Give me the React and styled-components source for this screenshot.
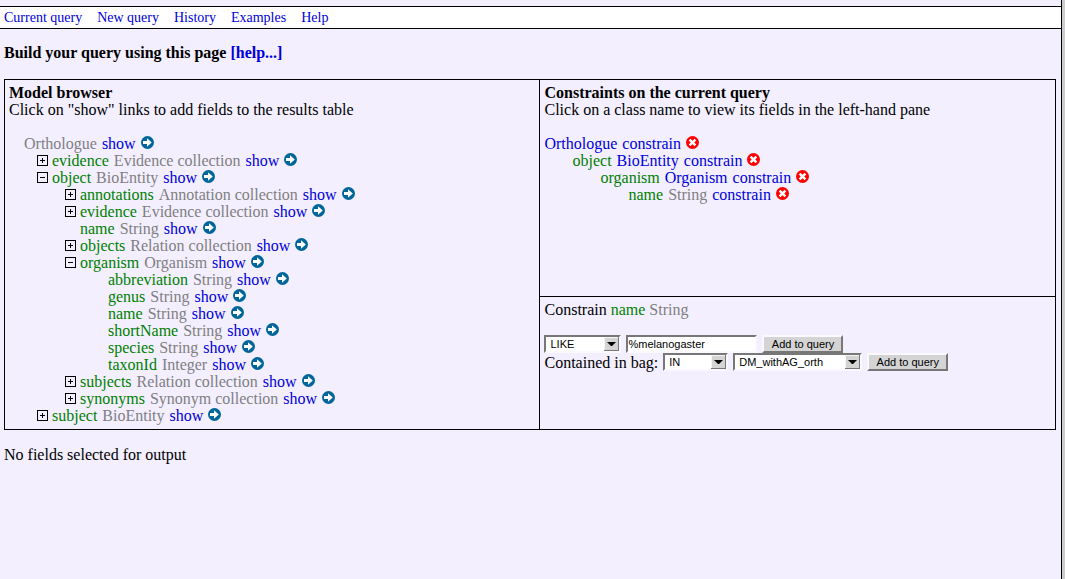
import React from "react";
import styled, { createGlobalStyle } from "styled-components";

const GlobalStyle = createGlobalStyle`
  *, *::before, *::after { box-sizing: border-box; }
  body {
    margin: 0;
    background: #f3efff;
    color: #000;
    font: 16px/17px "Liberation Serif", "Times New Roman", serif;
  }
`;

const Page = styled.div`
  min-height: 100vh;
  padding-top: 6px;
  border-right: 3px solid #ccc;
  box-shadow: inset -1px 0 0 #000;
`;

const Menu = styled.nav`
  display: flex;
  gap: 15px;
  margin-right: 1px;
  padding: 0 4px;
  background: #fff;
  border: solid #000;
  border-width: 1px 0;
  font-size: 14px;
  line-height: 21px;
`;

const Link = styled.a`
  color: #0000d8;
  text-decoration: none;
`;

const Content = styled.main`
  padding: 15px 6px 0 4px;
`;

const Title = styled.h1`
  margin: 0 0 17px;
  font-size: 16px;
  line-height: 18px;
`;

const Panels = styled.div`
  display: grid;
  grid-template-columns: 535fr 516fr;
  border: 1px solid #000;
`;

const Panel = styled.section`
  padding: 4px 4px 5px;
`;

const RightColumn = styled.div`
  display: flex;
  flex-direction: column;
  border-left: 1px solid #000;
`;

const ConstraintPanel = styled(Panel)`
  flex: 1;
`;

const EditorPanel = styled(Panel)`
  min-height: 133px;
  border-top: 1px solid #000;
`;

const PanelTitle = styled.h2`
  margin: 0;
  font-size: 16px;
  line-height: 17px;
`;

const Text = styled.p`
  margin: 0 0 ${(p) => (p.$spaced ? "17px" : "0")};
`;

const List = styled.ul`
  margin: 0;
  padding: 0;
  list-style: none;
`;

const Row = styled.li`
  display: flex;
  align-items: center;
  height: 17px;
  padding-left: ${(p) => p.$depth * 28}px;
  white-space: nowrap;
`;

const Entry = styled.span`
  display: flex;
  align-items: center;
  gap: 5px;
`;

const Slot = styled.span`
  display: flex;
  width: 15px;
`;

const Toggle = styled.button`
  display: flex;
  width: 11px;
  height: 11px;
  padding: 0;
  border: 1px solid #000;
  border-radius: 0;
  background: transparent;
`;

const Field = styled.span`
  color: #008000;
`;

const Type = styled.span`
  color: #808080;
`;

const IconLink = styled.a`
  display: flex;
  height: 15px;
`;

const Footer = styled.p`
  margin: 16px 0 0;
`;

const FormRow = styled.form`
  display: flex;
  align-items: center;
  gap: 5px;
  height: 18px;
  white-space: nowrap;
`;

const SelectBox = styled.span`
  position: relative;
  display: flex;
  width: ${(p) => p.$width}px;
`;

const Select = styled.select`
  appearance: none;
  width: 100%;
  height: 18px;
  padding: 0 18px 0 4px;
  border: 2px solid;
  border-color: #777 #fbf9ff #fbf9ff #777;
  border-radius: 0;
  background: #fff;
  color: #000;
  font: 11px/14px "Liberation Sans", Arial, sans-serif;
`;

const Arrow = styled.svg`
  position: absolute;
  top: 2px;
  right: 2px;
  pointer-events: none;
`;

const TextInput = styled.input`
  width: 131px;
  height: 18px;
  padding: 0;
  border: 2px solid;
  border-color: #777 #fbf9ff #fbf9ff #777;
  border-radius: 0;
  background: #fff;
  color: #000;
  font: 11px/14px "Liberation Sans", Arial, sans-serif;
`;

const Submit = styled.button`
  width: 81px;
  height: 18px;
  padding: 0;
  border: 2px solid;
  border-color: #fbf9ff #777 #777 #fbf9ff;
  border-radius: 0;
  background: #d4d4d4;
  color: #000;
  font: 11px/14px "Liberation Sans", Arial, sans-serif;
`;

const ShowIcon = () => (
  <svg width="13" height="13" viewBox="0 0 13 13" aria-hidden="true">
    <circle cx="6.5" cy="6.5" r="6.5" fill="#006699" />
    <path d="M2 5h4V2.2L10.8 6.5L6 10.8V8H2z" fill="#fff" />
  </svg>
);

const RemoveIcon = () => (
  <svg width="13" height="13" viewBox="0 0 13 13" aria-hidden="true">
    <circle cx="6.5" cy="6.5" r="6.5" fill="#f00" />
    <path d="M3.6 3.6l5.8 5.8M9.4 3.6l-5.8 5.8" stroke="#fff" strokeWidth="2.4" />
  </svg>
);

const ToggleMark = ({ open }) => (
  <svg width="9" height="9" viewBox="0 0 9 9" aria-hidden="true">
    <path d={open ? "M2 4h5v1H2z" : "M2 4h2V2h1v2h2v1H5v2H4V5H2z"} />
  </svg>
);

const tree = [
  { depth: 0, type: "Orthologue" },
  { depth: 1, toggle: "plus", field: "evidence", type: "Evidence collection" },
  { depth: 1, toggle: "minus", field: "object", type: "BioEntity" },
  { depth: 2, toggle: "plus", field: "annotations", type: "Annotation collection" },
  { depth: 2, toggle: "plus", field: "evidence", type: "Evidence collection" },
  { depth: 2, field: "name", type: "String" },
  { depth: 2, toggle: "plus", field: "objects", type: "Relation collection" },
  { depth: 2, toggle: "minus", field: "organism", type: "Organism" },
  { depth: 3, field: "abbreviation", type: "String" },
  { depth: 3, field: "genus", type: "String" },
  { depth: 3, field: "name", type: "String" },
  { depth: 3, field: "shortName", type: "String" },
  { depth: 3, field: "species", type: "String" },
  { depth: 3, field: "taxonId", type: "Integer" },
  { depth: 2, toggle: "plus", field: "subjects", type: "Relation collection" },
  { depth: 2, toggle: "plus", field: "synonyms", type: "Synonym collection" },
  { depth: 1, toggle: "plus", field: "subject", type: "BioEntity" },
];

const constraints = [
  { link: "Orthologue" },
  { field: "object", link: "BioEntity" },
  { field: "organism", link: "Organism" },
  { field: "name", type: "String" },
];

const menu = ["Current query", "New query", "History", "Examples", "Help"];

function TreeRow({ depth, toggle, field, type }) {
  return (
    <Row $depth={depth}>
      <Slot>
        {toggle && (
          <Toggle
            type="button"
            aria-label={`Toggle ${field}`}
            aria-expanded={toggle === "minus"}
          >
            <ToggleMark open={toggle === "minus"} />
          </Toggle>
        )}
      </Slot>
      <Entry>
        {field && <Field>{field}</Field>}
        <Type>{type}</Type>
        <Link href="#show">show</Link>
        <IconLink href="#show" aria-label={`Show ${field || type}`}>
          <ShowIcon />
        </IconLink>
      </Entry>
    </Row>
  );
}

function ConstraintRow({ depth, field, link, type }) {
  return (
    <Row $depth={depth}>
      <Entry>
        {field && <Field>{field}</Field>}
        {link && <Link href="#class">{link}</Link>}
        {type && <Type>{type}</Type>}
        <Link href="#constrain">constrain</Link>
        <IconLink href="#remove" aria-label={`Remove ${field || link}`}>
          <RemoveIcon />
        </IconLink>
      </Entry>
    </Row>
  );
}

function Dropdown({ width, options, ...rest }) {
  return (
    <SelectBox $width={width}>
      <Select {...rest}>
        {options.map((o) => (
          <option key={o}>{o}</option>
        ))}
      </Select>
      <Arrow width="15" height="14" viewBox="0 0 15 14" aria-hidden="true">
        <path d="M0 0h15v14H0z" fill="#777" />
        <path d="M0 0h14v13H0z" fill="#f4f4f4" />
        <path d="M1 1h13v12H1z" fill="#d4d4d4" />
        <path d="M3 5h9L8 9H7z" fill="#000" />
      </Arrow>
    </SelectBox>
  );
}

export default function App() {
  const stop = (e) => e.preventDefault();
  return (
    <>
      <GlobalStyle />
      <Page>
        <Menu>
          {menu.map((m) => (
            <Link key={m} href="#menu">{m}</Link>
          ))}
        </Menu>
        <Content>
          <Title>
            Build your query using this page <Link href="#help">[help...]</Link>
          </Title>
          <Panels>
            <Panel>
              <PanelTitle>Model browser</PanelTitle>
              <Text $spaced>
                Click on "show" links to add fields to the results table
              </Text>
              <List>
                {tree.map((n, i) => (
                  <TreeRow key={i} {...n} />
                ))}
              </List>
            </Panel>
            <RightColumn>
              <ConstraintPanel>
                <PanelTitle>Constraints on the current query</PanelTitle>
                <Text $spaced>
                  Click on a class name to view its fields in the left-hand pane
                </Text>
                <List>
                  {constraints.map((c, i) => (
                    <ConstraintRow key={i} depth={i} {...c} />
                  ))}
                </List>
              </ConstraintPanel>
              <EditorPanel>
                <Text $spaced>
                  Constrain <Field>name</Field> <Type>String</Type>
                </Text>
                <FormRow onSubmit={stop}>
                  <Dropdown width={77} aria-label="Operator" options={["LIKE"]} />
                  <TextInput aria-label="Value" defaultValue="%melanogaster" />
                  <Submit>Add to query</Submit>
                </FormRow>
                <FormRow onSubmit={stop}>
                  <label htmlFor="bag-op">Contained in bag:</label>
                  <Dropdown width={65} id="bag-op" options={["IN"]} />
                  <Dropdown width={129} aria-label="Bag" options={["DM_withAG_orth"]} />
                  <Submit>Add to query</Submit>
                </FormRow>
              </EditorPanel>
            </RightColumn>
          </Panels>
          <Footer>No fields selected for output</Footer>
        </Content>
      </Page>
    </>
  );
}
